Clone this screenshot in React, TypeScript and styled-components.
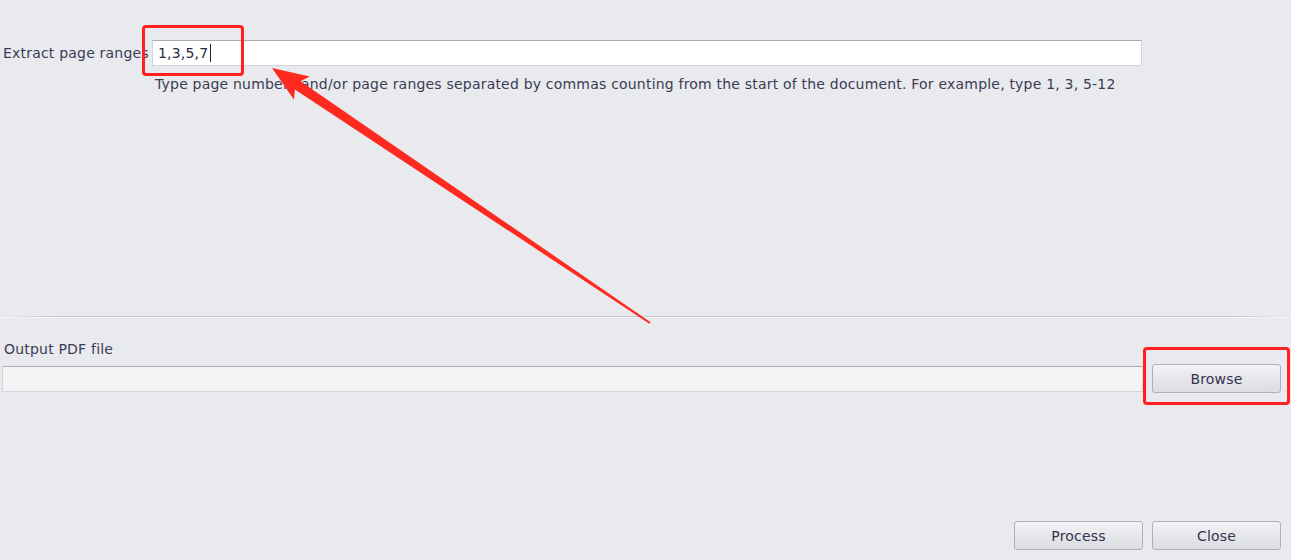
import React from "react";
import styled, { createGlobalStyle } from "styled-components";

const Global = createGlobalStyle`
  html, body { margin: 0; padding: 0; background: #e9eaee; }
  body { font-family: "DejaVu Sans", Verdana, sans-serif; }
`;

const Page = styled.div`
  position: relative;
  width: 1291px;
  height: 560px;
  overflow: hidden;
  background: #e9eaee;
  color: #3b3b55;
  font-size: 14px;
  letter-spacing: 0.2px;
  display: flex;
  flex-direction: column;
  padding-top: 40px;
  box-sizing: border-box;
`;

const RangeRow = styled.div`
  display: flex;
  align-items: center;
  height: 26px;
`;

const Label = styled.div<{ $width?: number }>`
  flex: 0 0 ${(p) => (p.$width ? `${p.$width}px` : "auto")};
  overflow: hidden;
  white-space: nowrap;
  line-height: 16px;
  padding-left: 3px;
  box-sizing: border-box;
`;

const TextField = styled.div<{ $disabled?: boolean; $width: number }>`
  width: ${(p) => p.$width}px;
  height: 26px;
  box-sizing: border-box;
  border: 1px solid #d4d5da;
  border-top-color: #a9aab2;
  background: ${(p) => (p.$disabled ? "#f4f4f6" : "#ffffff")};
  display: flex;
  align-items: center;
  padding-left: 5px;
  line-height: 16px;
  color: #2a2a40;
`;

const Caret = styled.span`
  display: inline-block;
  width: 1px;
  height: 18px;
  background: #222;
  margin-left: 2px;
`;

const Hint = styled.div`
  margin: 10px 0 0 155px;
  line-height: 16px;
  white-space: nowrap;
`;

const Separator = styled.div`
  margin-top: 224px;
  height: 1px;
  background: linear-gradient(to right, rgba(196,197,203,0) 0px, #c4c5cb 60px, #c4c5cb 1230px, rgba(196,197,203,0) 1290px);
  box-shadow: 0 1px 0 #f6f6f8;
`;

const OutputLabel = styled.div`
  margin: 24px 0 0 4px;
  line-height: 16px;
`;

const OutputRow = styled.div`
  margin-top: 7px;
  display: flex;
  align-items: center;
  padding-left: 2px;
  gap: 9px;
`;

const ButtonRow = styled.div`
  margin-top: 128px;
  display: flex;
  justify-content: flex-end;
  gap: 9px;
  padding-right: 10px;
`;

const Button = styled.div`
  width: 129px;
  height: 29px;
  box-sizing: border-box;
  border: 1px solid #aeafb7;
  border-radius: 3px;
  background: linear-gradient(to bottom, #f3f3f6 0%, #e6e7eb 50%, #dcdde2 100%);
  display: flex;
  align-items: center;
  justify-content: center;
  line-height: 16px;
  color: #33334d;
`;

const Mark = styled.div<{ $x: number; $y: number; $w: number; $h: number }>`
  position: absolute;
  left: ${(p) => p.$x}px;
  top: ${(p) => p.$y}px;
  width: ${(p) => p.$w}px;
  height: ${(p) => p.$h}px;
  box-sizing: border-box;
  border: 3px solid #ff2020;
  border-radius: 4px;
`;

const ArrowLayer = styled.svg`
  position: absolute;
  left: 0;
  top: 0;
  pointer-events: none;
`;

function arrowPoints(): string {
  const T = [272, 68];
  const tail = [650, 323];
  const dx = tail[0] - T[0];
  const dy = tail[1] - T[1];
  const len = Math.hypot(dx, dy);
  const u = [dx / len, dy / len];
  const n = [-u[1], u[0]];
  const at = (d: number, w: number) => [T[0] + u[0] * d + n[0] * w, T[1] + u[1] * d + n[1] * w];
  const pts = [
    T,
    at(36, -14),
    at(31, -5),
    at(len, -1),
    at(len, 1),
    at(31, 5),
    at(36, 14),
  ];
  return pts.map((p) => `${p[0].toFixed(1)},${p[1].toFixed(1)}`).join(" ");
}

export default function App() {
  return (
    <>
      <Global />
      <Page>
        <RangeRow>
          <Label $width={152}>Extract page ranges</Label>
          <TextField $width={990}>
            1,3,5,7
            <Caret />
          </TextField>
        </RangeRow>
        <Hint>
          Type page numbers and/or page ranges separated by commas counting from the start of the document. For example, type 1, 3, 5-12
        </Hint>
        <Separator />
        <OutputLabel>Output PDF file</OutputLabel>
        <OutputRow>
          <TextField $width={1141} $disabled />
          <Button>Browse</Button>
        </OutputRow>
        <ButtonRow>
          <Button>Process</Button>
          <Button>Close</Button>
        </ButtonRow>

        <Mark $x={142} $y={25} $w={102} $h={51} />
        <Mark $x={1143} $y={347} $w={147} $h={58} />
        <ArrowLayer width={1291} height={560} viewBox="0 0 1291 560">
          <polygon points={arrowPoints()} fill="#ff2a1f" />
        </ArrowLayer>
      </Page>
    </>
  );
}
